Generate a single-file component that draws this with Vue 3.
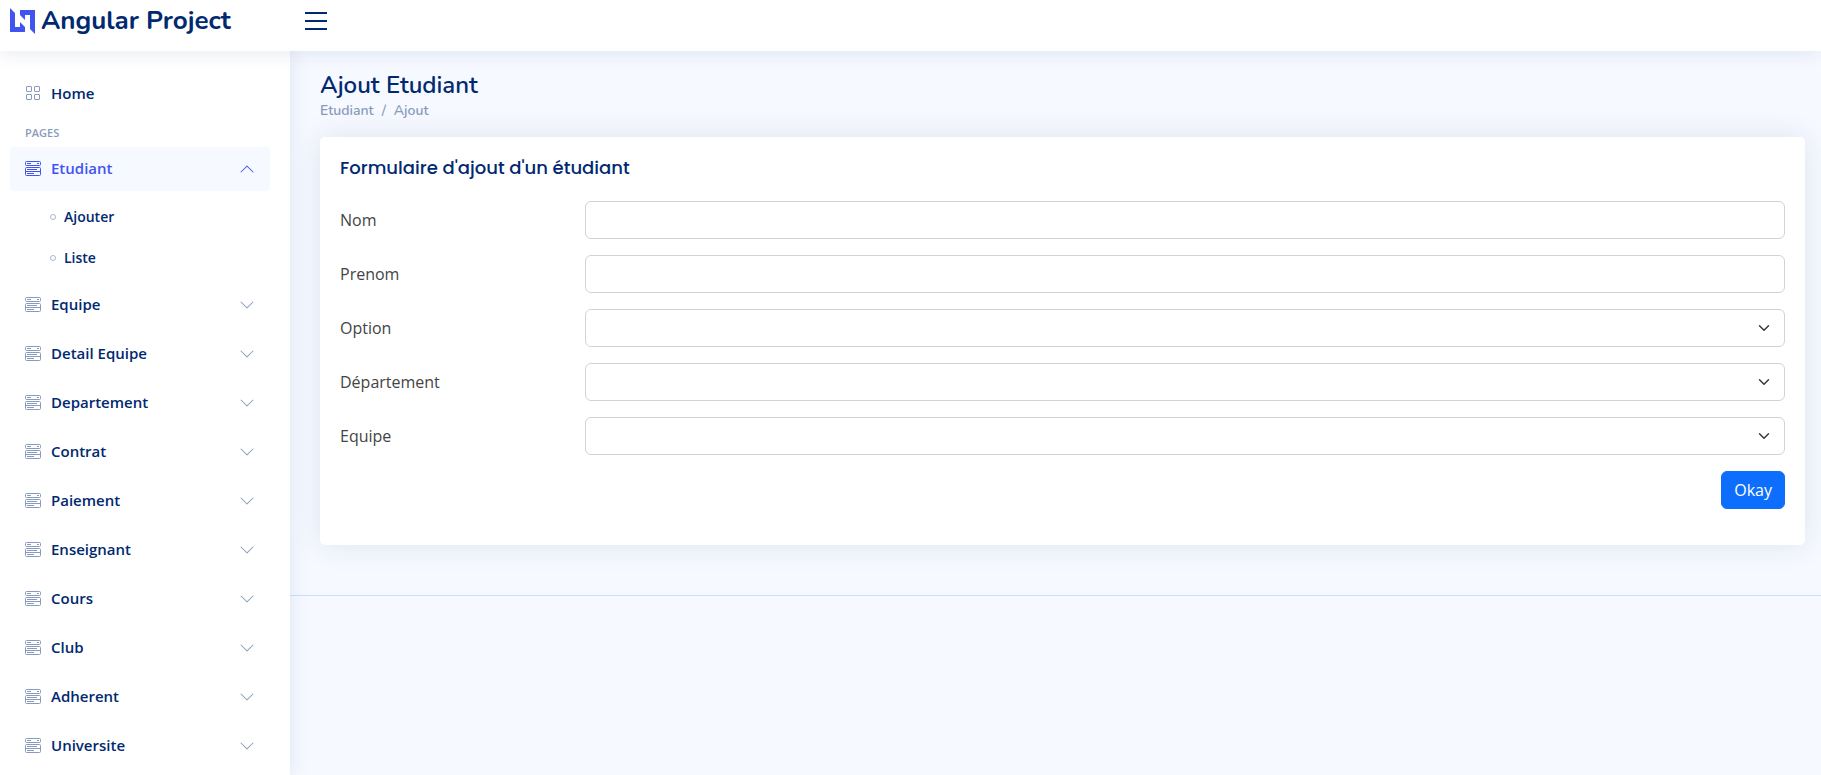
<script setup>
import { ref } from 'vue'

const sections = ref([
  { name: 'Etudiant', open: true, children: ['Ajouter', 'Liste'] },
  ...['Equipe', 'Detail Equipe', 'Departement', 'Contrat', 'Paiement', 'Enseignant', 'Cours', 'Club', 'Adherent', 'Universite']
    .map((name) => ({ name, open: false, children: ['Ajouter', 'Liste'] })),
])

const fields = [
  { id: 'nom', label: 'Nom', kind: 'text' },
  { id: 'prenom', label: 'Prenom', kind: 'text' },
  { id: 'option', label: 'Option', kind: 'select' },
  { id: 'departement', label: 'Département', kind: 'select' },
  { id: 'equipe', label: 'Equipe', kind: 'select' },
]
const sidebarShown = ref(true)
</script>

<template>
  <div class="layout">
    <header class="header">
      <a href="#" class="logo">
        <svg class="logo-mark" viewBox="0 0 26 26" aria-hidden="true">
          <path d="M0 0 5 5V19H10V14L15 19V24H0Z" />
          <path d="M25 26 20 21V7H15V12L10 7V2H25Z" />
        </svg>
        <span>Angular Project</span>
      </a>
      <button type="button" class="toggle" aria-label="Menu" @click="sidebarShown = !sidebarShown">
        <svg viewBox="0 0 32 32" aria-hidden="true">
          <path d="M5 8H27M5 16H27M5 24H27" />
        </svg>
      </button>
    </header>

    <div class="body">
      <aside v-show="sidebarShown" class="sidebar">
        <nav>
          <a href="#" class="nav-item">
            <svg class="icon outline" viewBox="0 0 16 16" aria-hidden="true">
              <rect x="1.5" y="1.5" width="5" height="5" rx="0.5" />
              <rect x="9.5" y="1.5" width="5" height="5" rx="0.5" />
              <rect x="1.5" y="9.5" width="5" height="5" rx="0.5" />
              <rect x="9.5" y="9.5" width="5" height="5" rx="0.5" />
            </svg>
            <span>Home</span>
          </a>
          <h2 class="nav-heading">Pages</h2>
          <div v-for="s in sections" :key="s.name" class="nav-group">
            <button type="button" class="nav-item" :class="{ active: s.open }" :aria-expanded="s.open" @click="s.open = !s.open">
              <svg class="icon outline" viewBox="0 0 16 16" aria-hidden="true">
                <rect x="0.5" y="0.5" width="15" height="4" rx="1" />
                <path d="M2 2.5H6M12 2.5H14" />
                <rect x="0.5" y="6.5" width="15" height="8" rx="1" />
                <path d="M2 8.5H12M1 10.5H15M2 12.5H9" />
              </svg>
              <span>{{ s.name }}</span>
              <svg class="icon chevron" viewBox="0 0 16 16" aria-hidden="true">
                <path d="M1.646 4.646a.5.5 0 0 1 .708 0L8 10.293l5.646-5.647a.5.5 0 0 1 .708.708l-6 6a.5.5 0 0 1-.708 0l-6-6a.5.5 0 0 1 0-.708z" />
              </svg>
            </button>
            <ul v-if="s.open" class="sub">
              <li v-for="c in s.children" :key="c">
                <a href="#"><i class="dot"></i>{{ c }}</a>
              </li>
            </ul>
          </div>
        </nav>
      </aside>

      <div class="content">
        <main class="main">
          <h1 class="page-title">Ajout Etudiant</h1>
          <nav aria-label="Breadcrumb">
            <ol class="breadcrumb">
              <li><a href="#">Etudiant</a></li>
              <li aria-hidden="true">/</li>
              <li><a href="#">Ajout</a></li>
            </ol>
          </nav>
          <section class="card">
            <h2 class="card-title">Formulaire d'ajout d'un étudiant</h2>
            <form @submit.prevent>
              <div v-for="f in fields" :key="f.id" class="row">
                <label :for="f.id">{{ f.label }}</label>
                <div class="field">
                  <input v-if="f.kind === 'text'" :id="f.id" type="text" class="control" />
                  <template v-else>
                    <select :id="f.id" class="control"></select>
                    <svg class="caret" viewBox="0 0 16 16" aria-hidden="true"><path d="m2 5 6 6 6-6" /></svg>
                  </template>
                </div>
              </div>
              <div class="actions">
                <button type="submit" class="submit">Okay</button>
              </div>
            </form>
          </section>
        </main>
        <footer class="footer"></footer>
      </div>
    </div>
  </div>
</template>

<style>
body {
  margin: 0;
  background: #f6f9ff;
  overflow: hidden;
}
</style>

<style scoped>
* {
  box-sizing: border-box;
}
.layout {
  display: flex;
  flex-direction: column;
  height: 100vh;
  font: 16px/24px "Open Sans", "Noto Sans", sans-serif;
  color: #444;
}
a {
  color: inherit;
  text-decoration: none;
}
button {
  border: 0;
  font: inherit;
  cursor: pointer;
}
.header {
  position: relative;
  z-index: 2;
  flex: none;
  display: flex;
  align-items: flex-start;
  height: 51px;
  padding: 0 10px;
  background: #fff;
  box-shadow: 0 2px 20px rgba(1, 41, 112, 0.1);
}
.logo {
  display: flex;
  align-items: center;
  gap: 5px;
  width: 280px;
  height: 42px;
  font: 700 26px/40px "Nunito", Lato, sans-serif;
  color: #012970;
}
.logo-mark {
  width: 26px;
  height: 26px;
  fill: #4154f1;
}
.toggle {
  display: flex;
  padding: 5px 10px;
  background: none;
}
.toggle svg {
  width: 32px;
  height: 32px;
  fill: none;
  stroke: #012970;
  stroke-width: 2;
}
.body {
  flex: 1;
  display: flex;
  min-height: 0;
}
.sidebar {
  position: relative;
  z-index: 1;
  flex: none;
  width: 290px;
  padding: 20px 20px 20px 10px;
  overflow: hidden;
  background: #fff;
  box-shadow: 0 0 20px rgba(1, 41, 112, 0.1);
}
.nav-item {
  display: flex;
  align-items: center;
  gap: 10px;
  width: 100%;
  height: 44px;
  padding: 0 15px;
  border-radius: 4px;
  background: #fff;
  color: #012970;
  font-size: 15px;
  font-weight: 600;
}
button.nav-item span {
  padding-bottom: 2px;
}
.nav-item.active {
  background: #f6f9ff;
  color: #4154f1;
}
.icon {
  flex: none;
  width: 16px;
  height: 16px;
  fill: #899bbd;
}
.active .icon {
  fill: #4154f1;
}
.icon.outline {
  fill: none;
  stroke: #899bbd;
}
.active .icon.outline {
  stroke: #4154f1;
}
.chevron {
  margin-left: auto;
}
.active .chevron {
  transform: rotate(180deg);
}
.nav-heading {
  margin: 9px 0 6px 15px;
  font-size: 11px;
  line-height: 17px;
  font-weight: 600;
  text-transform: uppercase;
  color: #899bbd;
}
.nav-group {
  margin-bottom: 5px;
}
.sub {
  margin: 0;
  padding: 5px 0 0;
  list-style: none;
}
.sub a {
  display: flex;
  align-items: center;
  gap: 8px;
  padding: 10px 0 10px 40px;
  color: #012970;
  font-size: 14px;
  line-height: 21px;
  font-weight: 600;
}
.dot {
  width: 6px;
  height: 6px;
  border: 1px solid #a9b7d1;
  border-radius: 50%;
}
.content {
  flex: 1;
  min-width: 0;
}
.main {
  padding: 20px 16px 20px 30px;
}
.page-title {
  margin: 0;
  font: 600 24px/29px "Nunito", Lato, sans-serif;
  color: #012970;
}
.breadcrumb {
  display: flex;
  gap: 8px;
  margin: 0 0 16px;
  padding: 0;
  list-style: none;
  font: 600 14px/21px "Nunito", Lato, sans-serif;
  color: #899bbd;
}
.card {
  margin-bottom: 30px;
  padding: 20px;
  border-radius: 5px;
  background: #fff;
  box-shadow: 0 0 30px rgba(1, 41, 112, 0.1);
}
.card-title {
  margin: 0;
  padding-bottom: 22px;
  font: 500 18px/22px "Poppins", Inter, sans-serif;
  color: #012970;
}
.row {
  display: flex;
  align-items: center;
  margin: 0 -12px 16px;
}
.row label {
  flex: 0 0 16.6667%;
  padding: 0 12px;
}
.field {
  position: relative;
  flex: 1;
  padding: 0 12px;
}
.control {
  display: block;
  width: 100%;
  height: 38px;
  padding: 6px 12px;
  border: 1px solid #ced4da;
  border-radius: 6px;
  background: #fff;
  font: inherit;
  color: #212529;
  appearance: none;
}
.caret {
  position: absolute;
  right: 27px;
  top: 13px;
  width: 12px;
  height: 12px;
  fill: none;
  stroke: #343a40;
  stroke-width: 2;
  stroke-linecap: round;
  stroke-linejoin: round;
  pointer-events: none;
}
.actions {
  display: flex;
  justify-content: flex-end;
  padding-bottom: 16px;
}
.submit {
  height: 38px;
  padding: 0 12px;
  border: 1px solid #0d6efd;
  border-radius: 6px;
  background: #0d6efd;
  color: #fff;
}
.footer {
  border-top: 1px solid #cddfff;
  padding: 20px 0;
}
</style>
